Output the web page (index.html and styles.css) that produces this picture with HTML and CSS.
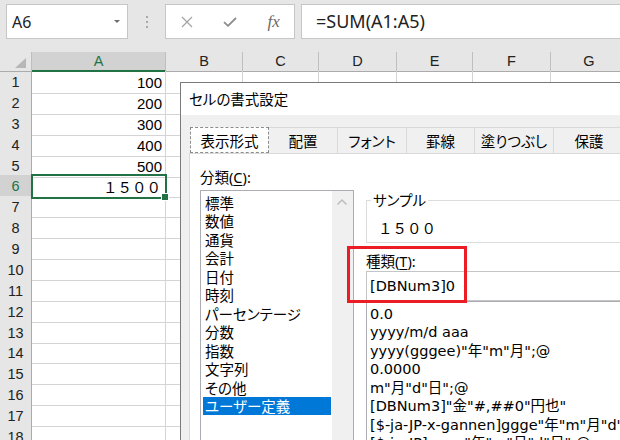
FILE: index.html
```html
<!DOCTYPE html>
<html lang="ja">
<head>
<meta charset="utf-8">
<title>セルの書式設定</title>
<link rel="stylesheet" href="styles.css">
</head>
<body>
<div class="app">
  <div class="fbar">
    <div class="namebox"><span>A6</span><svg class="dd" width="6" height="3" viewBox="0 0 6 3"><path d="M0 0h6L3 3z" fill="#6e6e6e"/></svg></div>
    <div class="grip"><i></i><i></i><i></i></div>
    <div class="fbtns">
      <div class="b"><svg width="12" height="12" viewBox="0 0 12 12"><path d="M1 1L11 11M11 1L1 11" stroke="#a3a3a3" stroke-width="1.2" fill="none"/></svg></div>
      <div class="b"><svg width="14" height="10" viewBox="0 0 14 10"><path d="M1 5.2L5 8.8L13 1" stroke="#8c8c8c" stroke-width="1.8" fill="none"/></svg></div>
      <div class="b"><span class="fx">fx</span></div>
    </div>
    <div class="finput">=SUM(A1:A5)</div>
  </div>

  <div class="sheet">
    <div class="row hdr">
      <div class="corner"><svg class="tri" width="11" height="10" viewBox="0 0 11 10"><path d="M11 0V10H0z" fill="#b7b7b7"/></svg></div>
      <div class="ch on">A</div><div class="ch">B</div><div class="ch">C</div><div class="ch">D</div><div class="ch">E</div><div class="ch">F</div><div class="ch">G</div>
    </div>
    <div class="row"><div class="rh">1</div><div class="c">100</div><div class="c"></div><div class="c"></div><div class="c"></div><div class="c"></div><div class="c"></div><div class="c"></div></div>
    <div class="row"><div class="rh">2</div><div class="c">200</div><div class="c"></div><div class="c"></div><div class="c"></div><div class="c"></div><div class="c"></div><div class="c"></div></div>
    <div class="row"><div class="rh">3</div><div class="c">300</div><div class="c"></div><div class="c"></div><div class="c"></div><div class="c"></div><div class="c"></div><div class="c"></div></div>
    <div class="row"><div class="rh">4</div><div class="c">400</div><div class="c"></div><div class="c"></div><div class="c"></div><div class="c"></div><div class="c"></div><div class="c"></div></div>
    <div class="row"><div class="rh">5</div><div class="c">500</div><div class="c"></div><div class="c"></div><div class="c"></div><div class="c"></div><div class="c"></div><div class="c"></div></div>
    <div class="row"><div class="rh on">6</div><div class="c sel fw">１５００</div><div class="c"></div><div class="c"></div><div class="c"></div><div class="c"></div><div class="c"></div><div class="c"></div></div>
    <div class="row"><div class="rh">7</div><div class="c"></div><div class="c"></div><div class="c"></div><div class="c"></div><div class="c"></div><div class="c"></div><div class="c"></div></div>
    <div class="row"><div class="rh">8</div><div class="c"></div><div class="c"></div><div class="c"></div><div class="c"></div><div class="c"></div><div class="c"></div><div class="c"></div></div>
    <div class="row"><div class="rh">9</div><div class="c"></div><div class="c"></div><div class="c"></div><div class="c"></div><div class="c"></div><div class="c"></div><div class="c"></div></div>
    <div class="row"><div class="rh">10</div><div class="c"></div><div class="c"></div><div class="c"></div><div class="c"></div><div class="c"></div><div class="c"></div><div class="c"></div></div>
    <div class="row"><div class="rh">11</div><div class="c"></div><div class="c"></div><div class="c"></div><div class="c"></div><div class="c"></div><div class="c"></div><div class="c"></div></div>
    <div class="row"><div class="rh">12</div><div class="c"></div><div class="c"></div><div class="c"></div><div class="c"></div><div class="c"></div><div class="c"></div><div class="c"></div></div>
    <div class="row"><div class="rh">13</div><div class="c"></div><div class="c"></div><div class="c"></div><div class="c"></div><div class="c"></div><div class="c"></div><div class="c"></div></div>
    <div class="row"><div class="rh">14</div><div class="c"></div><div class="c"></div><div class="c"></div><div class="c"></div><div class="c"></div><div class="c"></div><div class="c"></div></div>
    <div class="row"><div class="rh">15</div><div class="c"></div><div class="c"></div><div class="c"></div><div class="c"></div><div class="c"></div><div class="c"></div><div class="c"></div></div>
    <div class="row"><div class="rh">16</div><div class="c"></div><div class="c"></div><div class="c"></div><div class="c"></div><div class="c"></div><div class="c"></div><div class="c"></div></div>
    <div class="row"><div class="rh">17</div><div class="c"></div><div class="c"></div><div class="c"></div><div class="c"></div><div class="c"></div><div class="c"></div><div class="c"></div></div>
    <div class="row"><div class="rh">18</div><div class="c"></div><div class="c"></div><div class="c"></div><div class="c"></div><div class="c"></div><div class="c"></div><div class="c"></div></div>
  </div>

  <div class="dialog">
    <div class="dtitle">セルの書式設定</div>
    <div class="tabs">
      <div class="tab on t1">表示形式</div>
      <div class="tab t2">配置</div>
      <div class="tab t3">フォント</div>
      <div class="tab t4">罫線</div>
      <div class="tab t5">塗りつぶし</div>
      <div class="tab t6">保護</div>
    </div>
    <div class="page">
      <div class="lcol">
        <div class="lbl">分類(<span class="u">C</span>):</div>
        <div class="catlist">
          <div class="items">
            <div class="it">標準</div>
            <div class="it">数値</div>
            <div class="it">通貨</div>
            <div class="it">会計</div>
            <div class="it">日付</div>
            <div class="it">時刻</div>
            <div class="it">パーセンテージ</div>
            <div class="it">分数</div>
            <div class="it">指数</div>
            <div class="it">文字列</div>
            <div class="it">その他</div>
            <div class="it on">ユーザー定義</div>
          </div>
          <div class="sb"><svg width="21" height="20" viewBox="0 0 21 20"><path d="M5.5 13.5L10 9L14.5 13.5" stroke="#bdbdbd" stroke-width="1.5" fill="none"/></svg></div>
        </div>
      </div>
      <div class="rcol">
        <fieldset class="sample">
          <legend>サンプル</legend>
          <div class="sv">１５００</div>
        </fieldset>
        <div class="lbl kind">種類(<span class="u">T</span>):</div>
        <div class="finp">[DBNum3]0</div>
        <div class="fmtlist">
          <div class="it">0.0</div>
          <div class="it">yyyy/m/d aaa</div>
          <div class="it">yyyy(gggee)"年"m"月";@</div>
          <div class="it">0.0000</div>
          <div class="it">m"月"d"日";@</div>
          <div class="it">[DBNum3]"金"#,##0"円也"</div>
          <div class="it">[$-ja-JP-x-gannen]ggge"年"m"月"d"日";@</div>
          <div class="it">[$-ja-JP]ggge"年"m"月"d"日";@</div>
        </div>
      </div>
    </div>
  </div>

  <div class="mark"></div>
</div>
</body>
</html>
```

FILE: styles.css
```css
* { box-sizing: border-box; }
html, body { margin: 0; padding: 0; }
body {
  width: 620px;
  height: 440px;
  overflow: hidden;
  background: #fff;
  font-family: "Liberation Sans", "Noto Sans CJK JP", sans-serif;
  color: #000;
}
.app { position: relative; width: 620px; height: 440px; overflow: hidden; }

/* formula bar */
.fbar {
  height: 52px;
  background: #e6e6e6;
  display: flex;
  align-items: flex-start;
  padding: 4px 0 0 6px;
}
.namebox {
  flex: none;
  width: 122px;
  height: 35px;
  background: #fff;
  border: 1px solid #c6c6c6;
  display: flex;
  align-items: center;
  justify-content: space-between;
  padding: 0 7px 0 5px;
  font-family: "Noto Sans", sans-serif;
  font-size: 16px;
  color: #222;
}
.grip {
  flex: none;
  width: 37px;
  height: 35px;
  display: flex;
  flex-direction: column;
  align-items: center;
  justify-content: center;
  gap: 3px;
}
.grip i { display: block; width: 2px; height: 2px; background: #a8a8a8; }
.fbtns {
  flex: none;
  width: 130px;
  height: 35px;
  background: #fff;
  border: 1px solid #c6c6c6;
  display: flex;
}
.fbtns .b { width: 43px; display: flex; align-items: center; justify-content: center; }
.fx {
  font-family: "Liberation Serif", serif;
  font-style: italic;
  font-size: 17px;
  color: #6a6a6a;
  margin-left: 2px;
}
.finput {
  flex: none;
  width: 330px;
  margin-left: 6px;
  height: 35px;
  background: #fff;
  border: 1px solid #c6c6c6;
  font-family: "Noto Sans", sans-serif;
  font-size: 18px;
  line-height: 32px;
  padding-left: 14px;
  color: #222;
}

/* sheet */
.sheet { font-size: 15px; }
.row {
  display: grid;
  grid-template-columns: 32px 134px 77px 76px 78px 76px 78px 77px;
  height: 20.875px;
}
.row.hdr { height: 19px; }
.corner {
  position: relative;
  background: #e6e6e6;
  border-right: 1px solid #bfbfbf;
  border-bottom: 1px solid #ababab;
}
.tri { position: absolute; right: 5px; bottom: 3px; }
.ch {
  background: #e6e6e6;
  border-right: 1px solid #bfbfbf;
  border-bottom: 1px solid #ababab;
  text-align: center;
  font-size: 14.5px;
  line-height: 18px;
  color: #222;
}
.ch.on {
  background: #d2d2d2;
  color: #217346;
  border-bottom: 2px solid #217346;
}
.rh {
  background: #e6e6e6;
  border-right: 1px solid #ababab;
  border-bottom: 1px solid #cdcdcd;
  text-align: center;
  font-size: 14.5px;
  line-height: 20px;
  padding-top: 1px;
  color: #222;
}
.rh.on { background: #d2d2d2; color: #217346; }
.c {
  border-right: 1px solid #d4d4d4;
  border-bottom: 1px solid #d4d4d4;
  text-align: right;
  padding: 2px 3px 0 0;
  line-height: 20px;
  white-space: nowrap;
}
.c.fw { font-size: 14.5px; font-family: "Noto Sans CJK JP", sans-serif; padding-right: 4px; }
.c.sel {
  position: relative;
  outline: 2px solid #217346;
  outline-offset: -1px;
}
.c.sel::after {
  content: "";
  position: absolute;
  right: -3px;
  bottom: -3px;
  width: 6px;
  height: 6px;
  background: #217346;
  box-shadow: 0 0 0 1px #fff;
}

/* dialog */
.dialog {
  position: absolute;
  left: 180px;
  top: 82px;
  width: 470px;
  height: 380px;
  background: #f0f0f0;
  border: 1px solid #7a7a7a;
  font-family: "Noto Sans", "Noto Sans CJK JP", sans-serif;
  font-size: 14.5px;
  font-feature-settings: "palt";
  color: #000;
}
.dtitle {
  height: 32px;
  background: #fff;
  padding-left: 8px;
  line-height: 32px;
}
.tabs { display: flex; margin: 12px 0 0 9px; height: 26px; }
.tab {
  flex: none;
  height: 26px;
  border: 1px solid #d9d9d9;
  border-bottom: 0;
  margin-right: -1px;
  display: flex;
  align-items: center;
  justify-content: center;
  background: #f0f0f0;
  white-space: nowrap;
}
.tab.on { background: #fff; border: 1px dashed #8c8c8c; position: relative; z-index: 1; }
.t1 { width: 79px; }
.t2 { width: 70px; }
.t3 { width: 70px; }
.t4 { width: 69px; }
.t5 { width: 80px; }
.t6 { width: 72px; }
.page {
  margin-left: 8px;
  height: 300px;
  background: #fff;
  border: 1px solid #d9d9d9;
  display: flex;
  gap: 12px;
  padding: 14px 0 0 10px;
  overflow: hidden;
}
.lcol { flex: none; width: 154px; }
.lbl { line-height: 18px; white-space: nowrap; }
.u { text-decoration: underline; text-underline-offset: 2px; }
.catlist {
  margin-top: 4px;
  height: 260px;
  border: 1px solid #abadb3;
  display: flex;
}
.items { flex: 1; padding: 3px 1px 0 2px; }
.it { line-height: 18.45px; padding-left: 2px; white-space: nowrap; }
.it.on { background: #0078d7; color: #fff; }
.sb { flex: none; width: 21px; background: #f0f0f0; }
.sb svg { display: block; }

.rcol { flex: 1; min-width: 0; margin-top: 24px; }
.sample {
  margin: 0;
  border: 1px solid #dcdcdc;
  padding: 0 0 5px 6px;
  min-width: 0;
}
.sample legend { padding: 0 2px; margin-left: -2px; line-height: 16px; }
.sv {
  line-height: 18px;
  margin-top: 11px;
  padding-left: 5px;
  font-family: "Noto Sans CJK JP", sans-serif;
  font-feature-settings: normal;
}
.kind { margin-top: 9px; }
.finp {
  margin-top: 1px;
  height: 30px;
  border: 1px solid #c5c5c5;
  padding-left: 3px;
  line-height: 29px;
  font-family: "DejaVu Sans", "Noto Sans CJK JP", sans-serif;
  font-size: 14.5px;
  white-space: nowrap;
}
.fmtlist {
  height: 200px;
  border: 1px solid #abadb3;
  padding: 3px 0 0 1px;
  font-family: "DejaVu Sans", "Noto Sans CJK JP", sans-serif;
  font-size: 14.5px;
}

/* annotation overlay */
.mark {
  position: absolute;
  left: 347px;
  top: 246px;
  width: 120px;
  height: 57px;
  border: 3px solid #ec1c24;
}
```
